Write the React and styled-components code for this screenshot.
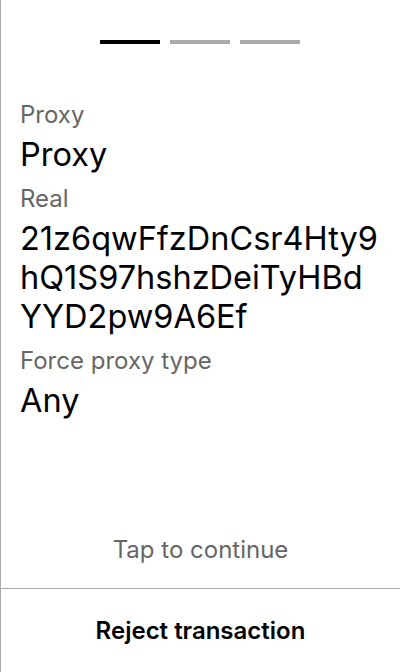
import styled, { createGlobalStyle } from "styled-components";

const GlobalStyle = createGlobalStyle`
	html, body {
		margin: 0;
		padding: 0;
		background: #fff;
	}
	body {
		font-family: Inter, "Noto Sans", sans-serif;
	}
`;

const Screen = styled.div`
	width: 400px;
	height: 672px;
	box-sizing: border-box;
	border-left: 1px solid #aaa;
	display: flex;
	flex-direction: column;
`;

const Steps = styled.div`
	display: flex;
	justify-content: center;
	gap: 10px;
	padding-top: 40px;
	padding-right: 1px;
`;

const Step = styled.div`
	width: 60px;
	height: 4px;
	background-color: ${(props) => (props.active ? "#000" : "#aaa")};
`;

const Content = styled.div`
	flex: 1;
	padding: 56px 20px 0 19px;
`;

const Label = styled.div`
	font-size: 24px;
	line-height: 30px;
	color: #666;
	margin-bottom: 5px;
`;

const Value = styled.div`
	font-size: 32.5px;
	line-height: 39px;
	color: #000;
	margin-bottom: 10px;
	word-break: break-all;
`;

const Hint = styled.div`
	text-align: center;
	font-size: 24px;
	line-height: 30px;
	color: #666;
	padding-bottom: 23px;
`;

const Footer = styled.div`
	border-top: 1px solid #aaa;
	height: 83px;
	display: flex;
	align-items: center;
	justify-content: center;
	font-size: 24px;
	font-weight: 600;
	color: #000;
`;

const fields = [
	{ label: "Proxy", value: "Proxy" },
	{ label: "Real", value: "21z6qwFfzDnCsr4Hty9hQ1S97hshzDeiTyHBdYYD2pw9A6Ef" },
	{ label: "Force proxy type", value: "Any" },
];

const App = () => {
	return (
		<>
			<GlobalStyle />
			<Screen>
				<Steps>
					<Step active />
					<Step />
					<Step />
				</Steps>
				<Content>
					{fields.map((f) => (
						<div key={f.label}>
							<Label>{f.label}</Label>
							<Value>{f.value}</Value>
						</div>
					))}
				</Content>
				<Hint>Tap to continue</Hint>
				<Footer>Reject transaction</Footer>
			</Screen>
		</>
	);
};

export default App;
